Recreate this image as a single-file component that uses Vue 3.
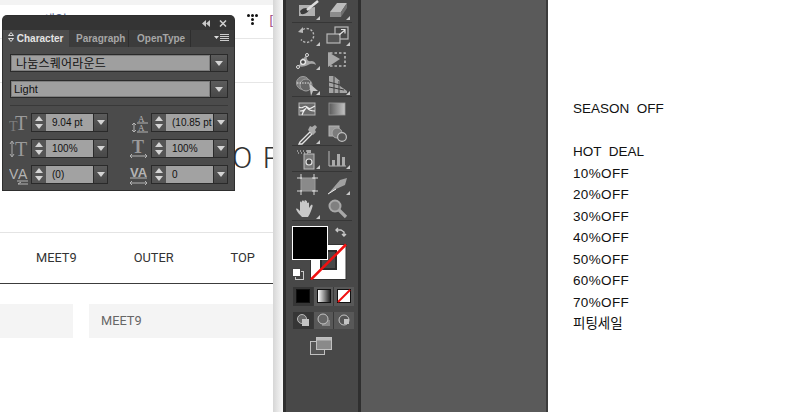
<script setup>
const listLines = ['SEASON  OFF', '', 'HOT  DEAL', '10%OFF', '20%OFF', '30%OFF', '40%OFF', '50%OFF', '60%OFF', '70%OFF', '피팅세일']

const leftFields = [
  { value: '9.04 pt', kind: 'size' },
  { value: '100%', kind: 'vscale' },
  { value: '(0)', kind: 'kern' }
]
const rightFields = [
  { value: '(10.85 pt', kind: 'lead' },
  { value: '100%', kind: 'hscale' },
  { value: '0', kind: 'track' }
]

const L = '#b8b8b8'
const corner = `<polygon points="28,19 28,23 24,23" fill="#c8c8c8"/>`
const toolGroups = [
  [
    `<path d="M7 8h13l-3 3 6-1v9H7z" fill="#b0b0b0"/><path d="M8 14c4-4 8-3 9-2s-3 6-8 5z" fill="#3a3a3a"/><path d="M15 13l11-9" stroke="#dcdcdc" stroke-width="2.500"/>${corner}`,
    `<polygon points="8,15 15,6 25,6 19,15" fill="#bcbcbc"/><polygon points="8,15 19,15 19,20 8,20" fill="#8c8c8c"/><polygon points="19,15 25,6 25,11 19,20" fill="#707070"/>${corner}`
  ],
  [
    `<path d="M11 6.500a7 7 0 1 1-2 10" fill="none" stroke="${L}" stroke-width="1.400" stroke-dasharray="2.200 1.600"/><path d="M11 4v6l-5-1z" fill="${L}"/>${corner}`,
    `<rect x="13" y="4" width="13" height="12" fill="none" stroke="${L}" stroke-width="1.200"/><rect x="5" y="11" width="13" height="9" fill="#555" stroke="${L}" stroke-width="1.200"/><path d="M17 12l6-5M19 6.500h4v4" fill="none" stroke="#e0e0e0" stroke-width="1.200"/>${corner}`,
    `<path d="M6 19c3-2 4-5 4-8 2 2 3-3 5-3-1 4 1 7 4 6 3 0 4 1 5 4-3-2-6-1-8 0-4 2-7 2-10 1z" fill="#a6a6a6"/><circle cx="11" cy="15" r="2.400" fill="#444" stroke="#eee" stroke-width="1.200"/><circle cx="6" cy="20" r="1.500" fill="#444" stroke="#ddd"/><circle cx="15" cy="8" r="1.500" fill="#444" stroke="#ddd"/>${corner}`,
    `<rect x="8" y="6" width="15" height="13" fill="none" stroke="${L}" stroke-width="1.600" stroke-dasharray="2.500 2"/><polygon points="6,5 18,12 6,20" fill="#a8a8a8"/>`,
    `<circle cx="11" cy="11" r="6.500" fill="#7a7a7a" stroke="#a0a0a0"/><circle cx="14" cy="13" r="6" fill="#666" stroke="#a0a0a0"/><path d="M5 11h14" stroke="#eee" stroke-dasharray="1.400 1.200"/><polygon points="17,11 26,19 21,19 19,24" fill="#c4c4c4"/>${corner}`,
    `<polygon points="7,4 12,4 18,9 18,14 25,19 25,21 7,21" fill="#a4a4a4"/><path d="M12 4v17M17 9v12M7 10l11 3M7 15l15 3" stroke="#3c3c3c"/>${corner}`
  ],
  [
    `<rect x="7" y="6" width="16" height="12" fill="#6a6a6a" stroke="#b4b4b4"/><path d="M7 10c4 3 5-3 8 0s4 1 8-1M10 18c1-4 3-5 5-8M15 10c1 3 4 4 8 4M8 14c3 0 4 0 5-2" fill="none" stroke="#eee" stroke-width="1.100"/>`,
    `<defs><linearGradient id="tool-grad"><stop offset="0" stop-color="#5a5a5a"/><stop offset="1" stop-color="#c4c4c4"/></linearGradient></defs><rect x="7" y="6" width="16" height="12" fill="url(#tool-grad)" stroke="#999" stroke-width=".8"/>`,
    `<path d="M8 21l10-10 2 2-10 10-3 0z" fill="none" stroke="#e4e4e4" stroke-width="1.300"/><path d="M16 9l5 5 3-3-1-2 2-3-2-2-3 2-2-1z" fill="#a8a8a8"/>${corner}`,
    `<rect x="7" y="5" width="10" height="10" fill="#9a9a9a" stroke="#b4b4b4"/><circle cx="15" cy="12" r="5" fill="#7c7c7c" stroke="#aaa"/><circle cx="20" cy="16" r="4.400" fill="#555" stroke="#c0c0c0" stroke-width="1.200"/>`
  ],
  [
    `<path d="M5 5h1M8 5h1M11 5h1M14 5h1M6 7h1M9 7h1M12 7h1M15 7h1" stroke="#ddd"/><rect x="15" y="4" width="4" height="3" fill="#aaa"/><rect x="12" y="8" width="10" height="15" fill="#777" stroke="#bbb"/><circle cx="17" cy="16" r="3" fill="#444" stroke="#e0e0e0" stroke-width="1.200"/>${corner}`,
    `<path d="M7 5v15h17" fill="none" stroke="${L}"/><rect x="10" y="14" width="3" height="6" fill="#aaa"/><rect x="15" y="8" width="3" height="12" fill="#aaa"/><rect x="20" y="11" width="3" height="9" fill="#aaa"/>${corner}`
  ],
  [
    `<rect x="9" y="6" width="14" height="13" fill="#8a8a8a" stroke="#9c9c9c"/><path d="M5 6h5M20 6h6M5 19h5M20 19h6M9 2v5M22 2v5M9 18v5M22 18v5" stroke="#d8d8d8"/>`,
    `<path d="M6 22L18 8 l7-2-2 7-9 4z" fill="#a0a0a0"/><path d="M6 22l8-5" stroke="#eee"/>${corner}`,
    `<path d="M10 21c-2-2-5-5-6-8 1-1 2 0 4 2V6c1-1 2 0 2 1V5c1-1 2 0 2.500 1V4.500c1-.8 2 0 2.500 1V7c1-1 2-.5 2 .500V12l2-3c1-.5 2 0 1.500 1.500-1 3-2 7-4.500 10.500z" fill="#c8c8c8"/>${corner}`,
    `<circle cx="13" cy="10" r="5.500" fill="#808080" stroke="#a8a8a8" stroke-width="2"/><path d="M17 14l7 7" stroke="#a8a8a8" stroke-width="3.200"/>`
  ]
]
</script>

<template>
  <div class="screen">
    <section class="site">
      <div class="site-strip"></div>
      <div class="site-top">
        <span class="promo">10%세일</span>
        <span class="top-links">Q Bookmark Login</span>
        <span class="dots"><i></i><i></i><i></i><i></i><i></i></span>
        <span class="bracket">[</span>
      </div>
      <div class="site-sub"></div>
      <div class="site-hero">O R</div>
      <nav class="site-nav">
        <span class="nav-one">MEET9</span>
        <span class="nav-two">OUTER</span>
        <span class="nav-three">TOP</span>
      </nav>
      <div class="site-cards">
        <div class="card card-short"></div>
        <div class="card card-long">MEET9</div>
      </div>

      <div class="panel">
        <div class="panel-title">
          <svg width="10" height="7" viewBox="0 0 10 7"><path d="M5 0v7L1 3.500zM9 0v7L5 3.500z" fill="#c8c8c8" /></svg>
          <svg width="8" height="7" viewBox="0 0 8 7"><path d="M1 .5l6 6M7 .5l-6 6" stroke="#d0d0d0" stroke-width="1.500" /></svg>
        </div>
        <div class="panel-tabs">
          <div class="tab tab-on">
            <svg width="6" height="10" viewBox="0 0 6 10"><path d="M3 .5L5.500 3.500H.5zM3 9.500L.5 6.500h5z" fill="none" stroke="#ddd" /></svg>
            Character
          </div>
          <div class="tab">Paragraph</div>
          <div class="tab tab-wide">OpenType</div>
          <div class="tab-menu">
            <svg width="15" height="9" viewBox="0 0 15 9"><path d="M0 2h5L2.500 5z" fill="#ddd" /><path d="M6 .5h9M6 2.500h9M6 4.500h9M6 6.500h9" stroke="#ccc" /></svg>
          </div>
        </div>
        <div class="panel-body">
          <div class="select">
            <div class="select-value font-name">나눔스퀘어라운드</div>
            <div class="select-btn"><span class="caret"></span></div>
          </div>
          <div class="select">
            <div class="select-value">Light</div>
            <div class="select-btn"><span class="caret"></span></div>
          </div>
          <div class="panel-rule"></div>
          <div class="fields">
            <div class="field-col">
              <div v-for="f in leftFields" :key="f.kind" class="field">
                <svg class="field-icon" width="20" height="20" viewBox="0 0 20 20">
                  <g v-if="f.kind === 'size'" class="glyphs">
                    <text x="0" y="18" font-size="14" fill="#7c7c7c">T</text>
                    <text x="6" y="17" font-size="20" fill="#9a9a9a">T</text>
                  </g>
                  <g v-else-if="f.kind === 'vscale'" class="glyphs">
                    <path d="M3 3v14M1 5l2-3 2 3M1 15l2 3 2-3" fill="none" stroke="#aaa" />
                    <text x="6" y="17" font-size="20" fill="#9a9a9a">T</text>
                  </g>
                  <g v-else class="glyphs">
                    <text x="0" y="14" font-size="14" fill="#b4b4b4" class="glyph-sans">V</text>
                    <text x="9" y="14" font-size="14" fill="#b4b4b4" class="glyph-sans">A</text>
                    <path d="M8 16h11M9 19h10M9 19l3-2" fill="none" stroke="#b4b4b4" />
                  </g>
                </svg>
                <div class="spin"><span class="up"></span><span class="down"></span></div>
                <div class="field-value">{{ f.value }}</div>
                <div class="select-btn small"><span class="caret"></span></div>
              </div>
            </div>
            <div class="field-col">
              <div v-for="f in rightFields" :key="f.kind" class="field">
                <svg class="field-icon" width="20" height="20" viewBox="0 0 20 20">
                  <g v-if="f.kind === 'lead'" class="glyphs">
                    <text x="9" y="9" font-size="9" fill="#b4b4b4">A</text>
                    <text x="9" y="18" font-size="9" fill="#b4b4b4">A</text>
                    <path d="M8 10h11M8 19h11M5 10v9M3 12l2-2 2 2M3 17l2 2 2-2" fill="none" stroke="#b4b4b4" />
                  </g>
                  <g v-else-if="f.kind === 'hscale'" class="glyphs">
                    <text x="3" y="14" font-size="18" font-weight="700" fill="#9a9a9a">T</text>
                    <path d="M1 17h17M3 15l-2 2 2 2M16 15l2 2-2 2" fill="none" stroke="#b4b4b4" />
                  </g>
                  <g v-else class="glyphs">
                    <text x="1" y="12" font-size="13" font-weight="700" fill="#b4b4b4" class="glyph-sans">VA</text>
                    <path d="M1 13h17M1 18h17M3 16l-2 2 2 2M16 16l2 2-2 2" fill="none" stroke="#b4b4b4" />
                  </g>
                </svg>
                <div class="spin"><span class="up"></span><span class="down"></span></div>
                <div class="field-value">{{ f.value }}</div>
                <div class="select-btn small"><span class="caret"></span></div>
              </div>
            </div>
          </div>
        </div>
      </div>
    </section>

    <div class="gutter"></div>

    <aside class="toolbar">
      <div class="tool-scroll">
        <div v-for="(group, g) in toolGroups" :key="g" class="tool-group" :class="{ first: g === 0 }">
          <svg v-for="(t, i) in group" :key="i" class="tool" viewBox="0 0 30 24" v-html="t"></svg>
        </div>
      </div>

      <svg class="colors" width="62" height="58" viewBox="0 0 62 58">
        <rect x="18.500" y="22.500" width="35.500" height="35" fill="#fff" stroke="#333" />
        <rect x="29" y="29" width="15" height="18" fill="#484848" stroke="#2c2c2c" stroke-width="2" />
        <path d="M19 57.500L54 22.500" stroke="#f01010" stroke-width="2.500" />
        <rect x=".5" y="4.500" width="35" height="33" fill="#000" stroke="#fff" />
        <path d="M46 6l-2 2 2 2M44 8h5l3 2v3M50 12l2 2 2-2" fill="none" stroke="#c8c8c8" stroke-width="1.400" />
        <rect x="3.500" y="49.500" width="8" height="8" fill="#444" stroke="#ccc" />
        <rect x=".5" y="46.500" width="8" height="8" fill="#fff" stroke="#444" />
      </svg>

      <div class="mode-row">
        <div class="mode mode-on"><span class="swatch swatch-black"></span></div>
        <div class="mode"><span class="swatch swatch-grad"></span></div>
        <div class="mode">
          <svg width="14" height="14" viewBox="0 0 14 14"><rect x=".5" y=".5" width="13" height="13" fill="#fff" stroke="#111" /><path d="M1 13L13 1" stroke="#f01010" stroke-width="2" /></svg>
        </div>
      </div>
      <div class="mode-row draw-row">
        <div class="mode mode-on">
          <svg width="14" height="14" viewBox="0 0 14 14"><circle cx="6" cy="6" r="4.500" fill="#666" stroke="#bbb" /><rect x="6" y="6" width="7" height="7" fill="#c4c4c4" /></svg>
        </div>
        <div class="mode">
          <svg width="14" height="14" viewBox="0 0 14 14"><rect x="5" y="7" width="8" height="6" fill="#888" /><circle cx="6" cy="6" r="5" fill="#666" stroke="#c4c4c4" /></svg>
        </div>
        <div class="mode">
          <svg width="14" height="14" viewBox="0 0 14 14"><circle cx="7" cy="7" r="5" fill="#555" stroke="#c4c4c4" /><rect x="7" y="6" width="5" height="5" fill="#c4c4c4" /></svg>
        </div>
      </div>
      <svg class="screen-mode" width="22" height="18" viewBox="0 0 22 18">
        <rect x=".5" y="4.500" width="14" height="13" fill="#555" stroke="#c0c0c0" />
        <rect x="6.500" y=".5" width="15" height="12" fill="#8a8a8a" stroke="#c0c0c0" />
        <rect x="7" y="1" width="14" height="2.500" fill="#bbb" />
      </svg>
    </aside>

    <div class="canvas-gap"></div>

    <main class="artboard">
      <div v-for="(line, i) in listLines" :key="i" class="line" :class="{ wide: line.includes('%') }">{{ line }}</div>
    </main>
  </div>
</template>

<style scoped>
.screen {
  display: flex;
  width: 797px;
  height: 412px;
  overflow: hidden;
  background: #fff;
  font-family: "Liberation Sans", "Noto Sans CJK KR", sans-serif;
}

.site {
  position: relative;
  flex: none;
  width: 273px;
  display: flex;
  flex-direction: column;
  background: #fff;
  overflow: hidden;
}
.site-strip {
  height: 5px;
  background: #f3f3f3;
}
.site-top {
  height: 34px;
  padding: 8px 0 0 17px;
  display: flex;
  font-size: 13px;
  line-height: 14px;
  border-bottom: 1px solid #e6e6e6;
  box-sizing: border-box;
  color: #555;
}
.promo {
  width: 80px;
  color: #5a6a9a;
}
.top-links {
  width: 151px;
}
.dots {
  display: grid;
  grid-template-columns: repeat(3, 3px);
  grid-auto-rows: 3px;
  gap: 1px;
  width: 22px;
  margin-top: 1px;
}
.dots i {
  width: 3px;
  height: 3px;
  border-radius: 50%;
  background: #111;
}
.dots i:nth-child(4),
.dots i:nth-child(5) {
  grid-column: 2;
}
.bracket {
  color: #a04a80;
}
.site-sub {
  height: 43px;
  border-bottom: 1px solid #e6e6e6;
}
.site-hero {
  height: 150px;
  padding: 57px 0 0 232px;
  box-sizing: border-box;
  border-bottom: 1px solid #e4e4e4;
  font-family: Roboto, "Liberation Sans", sans-serif;
  font-weight: 300;
  font-size: 30px;
  line-height: 36px;
  white-space: nowrap;
  letter-spacing: 1.5px;
  color: #333;
}
.site-nav {
  height: 51px;
  padding-bottom: 2px;
  box-sizing: border-box;
  border-bottom: 1px solid #3c3c3c;
  display: flex;
  align-items: center;
  font-family: Roboto, "Liberation Sans", sans-serif;
  font-size: 12.8px;
  color: #333;
}
.nav-one {
  margin-left: 36px;
}
.nav-two {
  margin-left: 57px;
}
.nav-three {
  margin-left: 57px;
}
.site-cards {
  display: flex;
  gap: 16px;
  margin-top: 20px;
}
.card {
  height: 34px;
  background: #f4f4f4;
  font-family: Roboto, "Liberation Sans", sans-serif;
  font-size: 12.8px;
  line-height: 33px;
  color: #666;
}
.card-short {
  width: 73px;
}
.card-long {
  flex: 1;
  padding-left: 12px;
}

.panel {
  position: absolute;
  left: 3px;
  top: 16px;
  width: 231px;
  height: 174px;
  background: #4b4b4b;
  border-radius: 4px 4px 0 0;
  box-shadow: 0 0 0 1px #2e2e2e;
  font-family: "Liberation Sans", sans-serif;
  color: #111;
}
.panel-title {
  height: 14px;
  display: flex;
  align-items: center;
  justify-content: flex-end;
  gap: 8px;
  padding-right: 7px;
  background: #343434;
  border-radius: 4px 4px 0 0;
}
.panel-tabs {
  height: 17px;
  display: flex;
  background: #3c3c3c;
  font-size: 10px;
  font-weight: 700;
  line-height: 17px;
  color: #a6a6a6;
}
.tab {
  width: 60px;
  box-sizing: border-box;
  padding-left: 7px;
  border-right: 1px solid #2e2e2e;
  white-space: nowrap;
}
.tab-wide {
  width: 62px;
  padding-left: 8px;
}
.tab-on {
  width: 66px;
  padding-left: 5px;
  border-right: 0;
  background: #4b4b4b;
  color: #e4e4e4;
}
.tab-menu {
  flex: 1;
  display: flex;
  align-items: center;
  justify-content: flex-end;
  padding-right: 5px;
}
.panel-body {
  padding: 7px 6px 0 7px;
}
.select {
  display: flex;
  height: 18px;
  margin-bottom: 8px;
  border: 1px solid #2a2a2a;
  box-sizing: border-box;
}
.select-value {
  flex: 1;
  padding-left: 3px;
  background: #9f9f9f;
  box-shadow: inset 0 0 0 1px #7e7e7e;
  font-size: 11px;
  line-height: 16px;
}
.font-name {
  padding-left: 5px;
  font-family: "Noto Sans CJK KR", sans-serif;
  font-size: 12px;
  letter-spacing: 0.2px;
}
.select-btn {
  flex: none;
  width: 17px;
  display: flex;
  align-items: center;
  justify-content: center;
  background: linear-gradient(#5c5c5c, #484848);
  border-left: 1px solid #2a2a2a;
  box-sizing: border-box;
}
.select-btn.small {
  width: 15px;
}
.caret {
  width: 0;
  height: 0;
  border-left: 4px solid transparent;
  border-right: 4px solid transparent;
  border-top: 5px solid #d4d4d4;
}
.panel-rule {
  height: 1px;
  background: #393939;
  margin: -1px 0 7px;
}
.fields {
  display: flex;
  justify-content: space-between;
}
.field-col {
  display: flex;
  flex-direction: column;
  gap: 7px;
}
.field {
  display: flex;
  align-items: center;
  height: 19px;
}
.field-icon {
  flex: none;
  margin-right: 2px;
  margin-left: -1px;
}
.glyphs {
  font-family: "Liberation Serif", serif;
}
.glyph-sans {
  font-family: "Liberation Sans", sans-serif;
}
.spin {
  flex: none;
  width: 15px;
  height: 19px;
  box-sizing: border-box;
  border: 1px solid #2a2a2a;
  border-right: 0;
  background: #555;
  display: flex;
  flex-direction: column;
  align-items: center;
  justify-content: space-between;
  padding: 2px 0;
}
.up,
.down {
  width: 0;
  height: 0;
  border-left: 4px solid transparent;
  border-right: 4px solid transparent;
}
.up {
  border-bottom: 5px solid #d4d4d4;
}
.down {
  border-top: 5px solid #d4d4d4;
}
.field-value {
  width: 47px;
  height: 19px;
  box-sizing: border-box;
  padding-left: 6px;
  background: #a2a2a2;
  border: 1px solid #2a2a2a;
  border-width: 1px 0;
  font-size: 10px;
  line-height: 17px;
  white-space: nowrap;
  overflow: hidden;
}
.field .select-btn {
  height: 19px;
  border: 1px solid #2a2a2a;
}

.gutter {
  flex: none;
  width: 10px;
  background: linear-gradient(90deg, #d6d6d6, #f8f8f8);
}

.toolbar {
  flex: none;
  width: 78px;
  box-sizing: border-box;
  border-left: 3px solid #2f2f2f;
  border-right: 3px solid #2f2f2f;
  background: #484848;
  display: flex;
  flex-direction: column;
  overflow: hidden;
}
.tool-scroll {
  margin: -3px 6px 0;
}
.tool-group {
  display: grid;
  grid-template-columns: 30px 30px;
  grid-auto-rows: 24.3px;
  border-bottom: 1px solid #363636;
}
.tool-group.first {
  height: 26px;
  box-sizing: border-box;
}
.tool {
  width: 30px;
  height: 24px;
  display: block;
}
.colors {
  flex: none;
  margin: 0.6px 0 0 6px;
  display: block;
}
.mode-row {
  display: flex;
  gap: 1px;
  margin: 6px 0 0 7px;
  width: 61px;
  height: 19px;
  background: #393939;
}
.colors + .mode-row {
  margin-top: 7px;
}
.draw-row {
  height: 17px;
}
.mode {
  flex: 1;
  display: flex;
  align-items: center;
  justify-content: center;
  background: #585858;
}
.mode-on {
  background: #363636;
}
.swatch {
  width: 14px;
  height: 14px;
  box-sizing: border-box;
  border: 1px solid #111;
}
.swatch-black {
  background: #000;
}
.swatch-grad {
  background: linear-gradient(90deg, #fff, #222);
}
.screen-mode {
  margin: 8px 0 0 24px;
  display: block;
}

.canvas-gap {
  flex: none;
  width: 185px;
  background: #5a5a5a;
  border-right: 2px solid #3c3c3c;
}

.artboard {
  flex: 1;
  padding: 98px 0 0 25px;
  font-size: 13.5px;
  line-height: 21.5px;
  color: #111;
}
.line {
  height: 21.5px;
  white-space: pre;
}
.wide {
  letter-spacing: 0.35px;
}
</style>
